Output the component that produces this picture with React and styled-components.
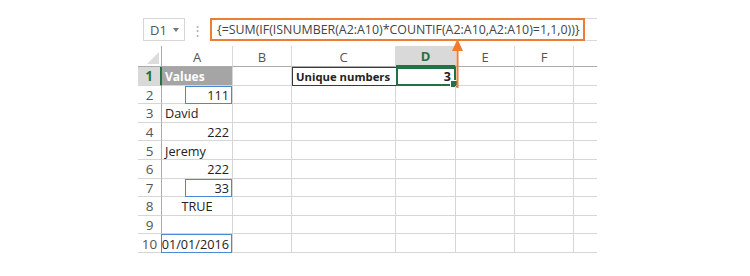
import React from 'react'
import styled, { createGlobalStyle, css } from 'styled-components'

const GlobalStyle = createGlobalStyle`
  * { box-sizing: border-box; }
  body {
    margin: 0;
    background: #fff;
    font-family: "Open Sans", "Liberation Sans", sans-serif;
  }
`;

const Page = styled.div`
  position: relative;
  width: 750px;
  height: 276px;
  padding: 18px 0 0 138px;
  background: #fff;
`;

const FormulaBar = styled.div`
  display: flex;
  align-items: stretch;
  width: 459px;
  height: 23px;
`;

const NameBox = styled.div`
  width: 42px;
  margin-left: 5px;
  border: 1px solid #d6d6d6;
  display: flex;
  align-items: center;
  padding-left: 6px;
  gap: 6px;
  font-size: 13px;
  color: #555;
`;

const Caret = styled.span`
  width: 0;
  height: 0;
  border-left: 3px solid transparent;
  border-right: 3px solid transparent;
  border-top: 4px solid #777;
`;

const Dots = styled.div`
  width: 25px;
  display: flex;
  align-items: center;
  justify-content: center;
  color: #aaa;
  font-size: 13px;
`;

const FormulaInput = styled.div`
  width: 375px;
  border: 2px solid #ed7d31;
  display: flex;
  align-items: center;
  padding-left: 5px;
  font-size: 12.4px;
  color: #444;
  white-space: nowrap;
  overflow: hidden;
`;

const BarTail = styled.div`
  flex: 1;
  border-top: 1px solid #dadada;
  border-bottom: 1px solid #dadada;
`;

const Sheet = styled.div`
  display: grid;
  grid-template-columns: 24px 71px 59px 104px 60px 59px 59px 23px;
  grid-template-rows: 21px repeat(10, 18.6px);
  margin-top: 5px;
  width: 459px;
  font-size: 12.7px;
  color: #222;
`;

const Corner = styled.div`
  position: relative;
  border-right: 1px solid #ababab;
  border-bottom: 1px solid #ababab;
  &::after {
    content: "";
    position: absolute;
    right: 2px;
    bottom: 2px;
    border-left: 12px solid transparent;
    border-bottom: 12px solid #dcdcdc;
  }
`;

const ColHead = styled.div`
  display: flex;
  align-items: center;
  justify-content: center;
  padding-top: 1px;
  font-size: 13px;
  color: #555;
  border-right: ${p => (p.$last ? 'none' : '1px solid #d9d9d9')};
  border-bottom: 1px solid #ababab;
  ${p => p.$active && css`
    background: #d9d9d9;
    color: #217346;
    font-weight: 700;
    border-bottom: 2px solid #217346;
  `}
`;

const RowHead = styled.div`
  display: flex;
  align-items: center;
  justify-content: center;
  padding-top: 1px;
  font-size: 13.5px;
  color: #555;
  border-right: 1px solid #ababab;
  border-bottom: 1px solid #d6d6d6;
  ${p => p.$active && css`
    background: #d9d9d9;
    color: #217346;
    font-weight: 700;
    border-right: 2px solid #217346;
  `}
`;

const Cell = styled.div`
  position: relative;
  display: flex;
  align-items: center;
  justify-content: ${p => p.$align || 'flex-start'};
  padding: 1px 3px 0;
  white-space: nowrap;
  font-weight: ${p => (p.$bold ? 700 : 400)};
  font-size: ${p => (p.$bold ? '11.3px' : 'inherit')};
  border-right: ${p => (p.$last ? 'none' : '1px solid #d6d6d6')};
  border-bottom: 1px solid #d6d6d6;
  ${p => p.$kind === 'header' && css`
    background: #a5a5a5;
    color: #fff;
    font-size: 12px;
  `}
  ${p => p.$kind === 'boxed' && css`
    border: 1px solid #3a3a3a;
    border-right: none;
  `}
  ${p => p.$kind === 'active' && css`
    border: 2px solid #217346;
    font-size: 12.5px;
    &::after {
      content: "";
      position: absolute;
      right: -4px;
      bottom: -4px;
      width: 6px;
      height: 6px;
      background: #217346;
      border: 1px solid #fff;
    }
  `}
  ${p => p.$mark && css`
    padding: 0;
  `}
`;

const Mark = styled.span`
  display: flex;
  align-items: center;
  justify-content: flex-end;
  width: ${p => p.$width}px;
  height: calc(100% + 1px);
  margin-bottom: -1px;
  padding: 1px 2px 0;
  border: 1.5px solid #4a8ad0;
`;

const Arrow = styled.svg`
  position: absolute;
  left: 452px;
  top: 39px;
`;

const columns = ['A', 'B', 'C', 'D', 'E', 'F', '']

const rows = [
  { n: 1, cells: { A: { text: 'Values', bold: true, kind: 'header' }, C: { text: 'Unique numbers', bold: true, kind: 'boxed' }, D: { text: '3', bold: true, kind: 'active', align: 'flex-end' } } },
  { n: 2, cells: { A: { text: '111', align: 'flex-end', mark: 47 } } },
  { n: 3, cells: { A: { text: 'David' } } },
  { n: 4, cells: { A: { text: '222', align: 'flex-end' } } },
  { n: 5, cells: { A: { text: 'Jeremy' } } },
  { n: 6, cells: { A: { text: '222', align: 'flex-end' } } },
  { n: 7, cells: { A: { text: '33', align: 'flex-end', mark: 47 } } },
  { n: 8, cells: { A: { text: 'TRUE', align: 'center' } } },
  { n: 9, cells: {} },
  { n: 10, cells: { A: { text: '01/01/2016', align: 'flex-end', mark: 71 } } },
]

const App = () => {
  return (
    <Page>
      <GlobalStyle />
      <FormulaBar>
        <NameBox>D1<Caret /></NameBox>
        <Dots>⋮</Dots>
        <FormulaInput>{'{=SUM(IF(ISNUMBER(A2:A10)*COUNTIF(A2:A10,A2:A10)=1,1,0))}'}</FormulaInput>
        <BarTail />
      </FormulaBar>
      <Sheet>
        <Corner />
        {columns.map((c, i) => (
          <ColHead key={i} $active={c === 'D'} $last={i === columns.length - 1}>{c}</ColHead>
        ))}
        {rows.map(row => (
          <React.Fragment key={row.n}>
            <RowHead $active={row.n === 1}>{row.n}</RowHead>
            {columns.map((c, i) => {
              const cell = row.cells[c] || {}
              return (
                <Cell
                  key={i}
                  $align={cell.align}
                  $bold={cell.bold}
                  $kind={cell.kind}
                  $mark={!!cell.mark}
                  $last={i === columns.length - 1}
                >
                  {cell.mark ? <Mark $width={cell.mark}>{cell.text}</Mark> : cell.text}
                </Cell>
              )
            })}
          </React.Fragment>
        ))}
      </Sheet>
      <Arrow width="11" height="49" viewBox="0 0 11 49">
        <line x1="5.5" y1="10" x2="5.5" y2="49" stroke="#ed7d31" strokeWidth="2" />
        <polygon points="0,12 5.5,0 11,12" fill="#ed7d31" />
      </Arrow>
    </Page>
  )
}

export default App
